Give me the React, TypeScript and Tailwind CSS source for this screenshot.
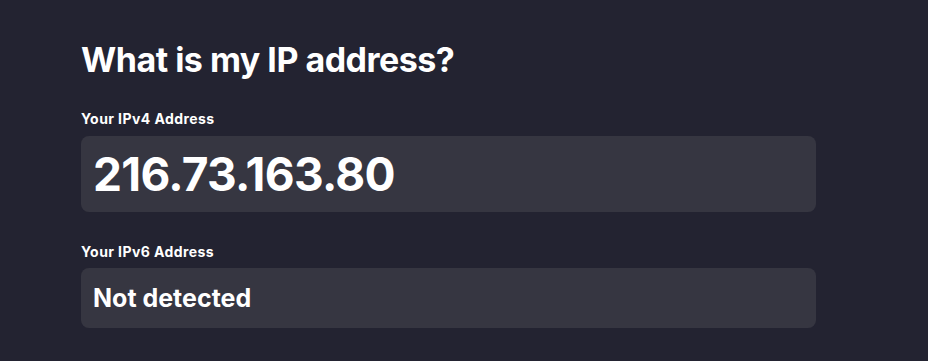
export default function App() {
  return (
    <div className="w-[928px] h-[361px] bg-[#232331] text-white overflow-hidden" style={{ fontFamily: 'Inter, "Noto Sans", sans-serif' }}>
      <div className="pl-[81px] w-[816px] pt-[39px]">
        <h1 className="text-[34px] leading-[41px] font-bold tracking-[-0.015em]">What is my IP address?</h1>
        <div className="mt-[31px] text-[14px] leading-[16px] font-bold tracking-[0.03em]">Your IPv4 Address</div>
        <div className="mt-[9px] h-[76px] rounded-[8px] bg-[#363641] flex items-center px-[12px]">
          <span className="text-[46px] font-bold leading-none tracking-[-0.015em]">216.73.163.80</span>
        </div>
        <div className="mt-[32px] text-[14px] leading-[16px] font-bold tracking-[0.03em]">Your IPv6 Address</div>
        <div className="mt-[8px] h-[60px] rounded-[8px] bg-[#363641] flex items-center px-[12px]">
          <span className="text-[25px] font-bold leading-none">Not detected</span>
        </div>
      </div>
    </div>
  );
}
